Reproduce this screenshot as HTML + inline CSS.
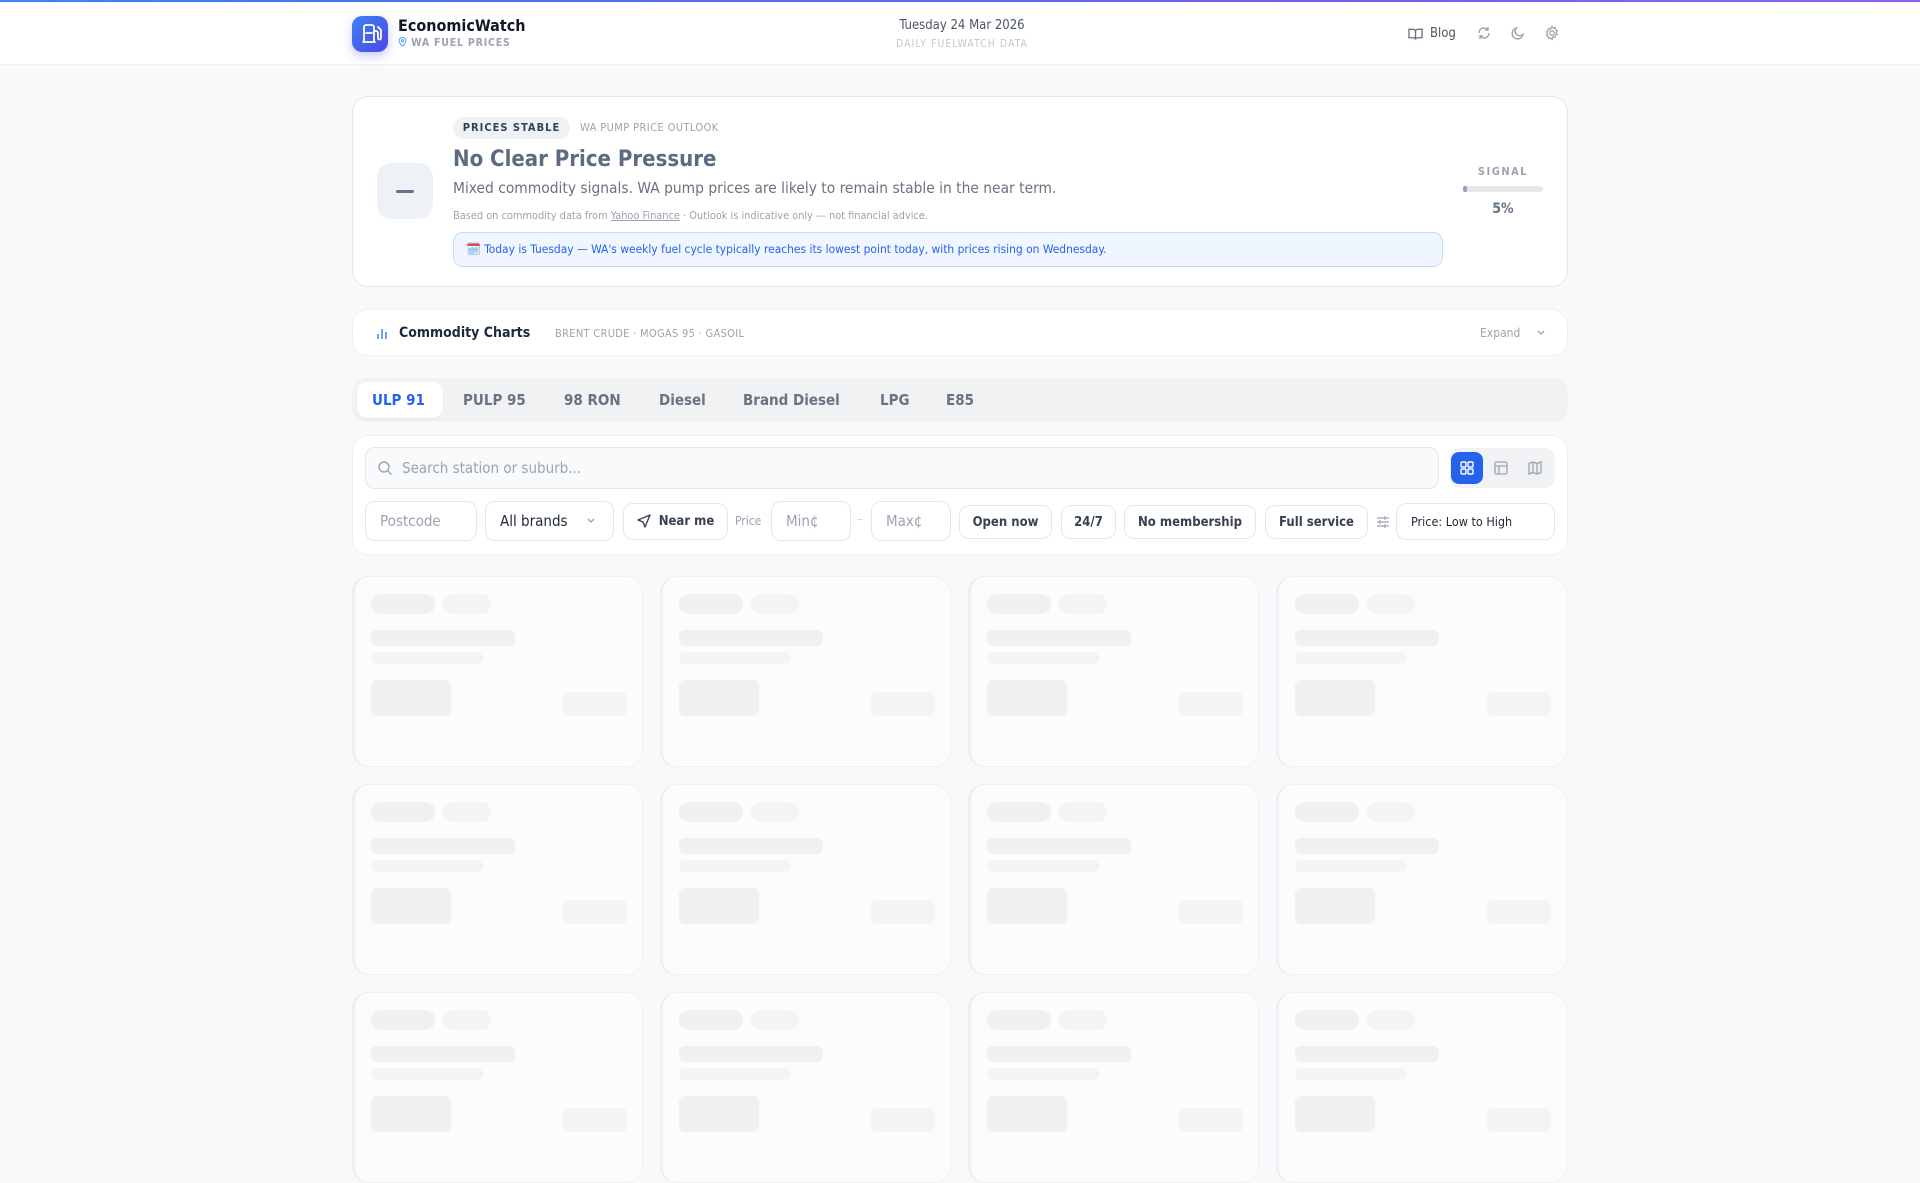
<!DOCTYPE html>
<html><head><meta charset="utf-8"><style>
*{box-sizing:border-box;margin:0;padding:0}
body{width:1920px;height:1080px;overflow:hidden;background:#f8f9fb;font-family:"DejaVu Sans Condensed","DejaVu Sans","Liberation Sans",sans-serif;color:#111827;position:relative}
.a{position:absolute}
.topbar{left:0;top:0;width:1920px;height:2px;background:linear-gradient(90deg,#3b82f6,#6366f1,#8b5cf6)}
header{position:absolute;left:0;top:2px;width:1920px;height:63px;background:#fff;border-bottom:1px solid #eef0f3}
.card{position:absolute;background:#fff;border:1px solid #e5e7eb;border-radius:16px}
.sk{position:absolute;background:#fcfcfc;border:1px solid #eef0f3;border-left:3px solid #eceff4;border-radius:16px;width:291px;height:191px}
.sk i{position:absolute;display:block;background:#eff0f2;border-radius:6px}
.sk i.l{background:#f3f4f6}
.inp{position:absolute;border:1px solid #e5e7eb;border-radius:10px;background:#fff;font-size:15px;color:#9ca3af;display:flex;align-items:center;padding-left:14px;height:40px;top:501px}
.chip{position:absolute;border:1px solid #e5e7eb;border-radius:10px;background:#fff;font-size:13px;font-weight:bold;color:#374151;display:flex;align-items:center;justify-content:center;height:34px;top:505px}
.tab{position:absolute;top:391px;font-size:15px;font-weight:bold;color:#6b7280}
</style></head><body>
<div class="a topbar"></div>
<header>
 <div class="a" style="left:352px;top:14px;width:36px;height:36px;border-radius:10px;background:linear-gradient(135deg,#3b82f6,#4f46e5);box-shadow:0 4px 10px rgba(79,70,229,.3)">
  <svg width="36" height="36" viewBox="0 0 36 36" fill="none" stroke="#fff" stroke-width="1.8" stroke-linecap="round" stroke-linejoin="round"><path d="M12 26V11a2 2 0 0 1 2-2h6a2 2 0 0 1 2 2v15M11 26h12M14 17h6M22 15h2a2 2 0 0 1 2 2v5a1.5 1.5 0 0 0 3 0v-8l-3-3"/></svg>
 </div>
 <div class="a" style="left:398px;top:14px;font-size:16px;font-weight:bold;color:#111827">EconomicWatch</div>
 <div class="a" style="left:398px;top:35px;font-size:10.5px;font-weight:bold;color:#9ca3af;letter-spacing:.8px">
  <svg width="9" height="10" viewBox="0 0 10 12" style="vertical-align:-1px" fill="none" stroke="#60a5fa" stroke-width="1.3"><path d="M5 11s4-3.5 4-6.5a4 4 0 0 0-8 0C1 7.5 5 11 5 11z"/><circle cx="5" cy="4.5" r="1.3"/></svg> WA FUEL PRICES</div>
 <div class="a" style="left:862px;width:200px;top:16px;text-align:center;font-size:13px;color:#4b5563">Tuesday 24 Mar 2026</div>
 <div class="a" style="left:842px;width:240px;top:36px;text-align:center;font-size:10.5px;color:#c4c8cf;letter-spacing:1px">DAILY FUELWATCH DATA</div>
 <svg class="a" style="left:1408px;top:25px" width="15" height="14" viewBox="0 0 16 14" fill="none" stroke="#6b7280" stroke-width="1.4"><path d="M1 2h4.5A2.5 2.5 0 0 1 8 4.5V13a2 2 0 0 0-2-2H1zM15 2h-4.5A2.5 2.5 0 0 0 8 4.5V13a2 2 0 0 1 2-2h5z"/></svg>
 <div class="a" style="left:1430px;top:24px;font-size:13px;color:#4b5563">Blog</div>
 <svg class="a" style="left:1476px;top:23px" width="16" height="16" viewBox="0 0 16 16" fill="none" stroke="#9ca3af" stroke-width="1.4"><path d="M3 8a5 5 0 0 1 9-3M13 8a5 5 0 0 1-9 3M12 2v3H9M4 14v-3h3"/></svg>
 <svg class="a" style="left:1510px;top:23px" width="16" height="16" viewBox="0 0 16 16" fill="none" stroke="#9ca3af" stroke-width="1.4"><path d="M13 9.5A5.5 5.5 0 1 1 6.5 3 4.3 4.3 0 0 0 13 9.5z"/></svg>
 <svg class="a" style="left:1544px;top:23px" width="16" height="16" viewBox="0 0 16 16" fill="none" stroke="#9ca3af" stroke-width="1.3"><circle cx="8" cy="8" r="2.2"/><path d="M8 1.5l1.2 1.6 2-.4.4 2 1.6 1.2-1 1.8.9 1.8-1.9.8-.3 2-2-.3L8 14.5l-1.3-1.5-2 .3-.3-2-1.9-.8.9-1.8-1-1.8 1.6-1.2.4-2 2 .4z"/></svg>
</header>

<div class="card" style="left:352px;top:96px;width:1216px;height:191px">
 <div class="a" style="left:24px;top:66px;width:56px;height:56px;border-radius:14px;background:#eef1f6"><div class="a" style="left:19px;top:27px;width:18px;height:3px;border-radius:2px;background:#64748b"></div></div>
 <div class="a" style="left:100px;top:20px;width:117px;height:22px;border-radius:11px;background:#eef1f6;font-size:11px;font-weight:bold;color:#334155;letter-spacing:1px;text-align:center;line-height:22px">PRICES STABLE</div>
 <div class="a" style="left:227px;top:24px;font-size:11px;color:#9ca3af;letter-spacing:.4px">WA PUMP PRICE OUTLOOK</div>
 <div class="a" style="left:100px;top:50px;font-size:22px;font-weight:bold;color:#5b6b82">No Clear Price Pressure</div>
 <div class="a" style="left:100px;top:82px;font-size:15.4px;color:#6b7280">Mixed commodity signals. WA pump prices are likely to remain stable in the near term.</div>
 <div class="a" style="left:100px;top:112px;font-size:10.9px;color:#9ca3af">Based on commodity data from <u>Yahoo Finance</u> · Outlook is indicative only — not financial advice.</div>
 <div class="a" style="left:100px;top:135px;width:990px;height:35px;border-radius:10px;background:#eff6ff;border:1px solid #bfdbfe;font-size:11.9px;color:#2563eb;line-height:33px;padding-left:12px">🗓️ Today is Tuesday — WA's weekly fuel cycle typically reaches its lowest point today, with prices rising on Wednesday.</div>
 <div class="a" style="left:1110px;top:68px;width:80px;text-align:center;font-size:11px;font-weight:bold;color:#9ca3af;letter-spacing:1.5px">SIGNAL</div>
 <div class="a" style="left:1110px;top:89px;width:80px;height:6px;border-radius:3px;background:#e5e7eb"><div style="width:4px;height:6px;border-radius:3px;background:#94a3b8"></div></div>
 <div class="a" style="left:1110px;top:104px;width:80px;text-align:center;font-size:14px;font-weight:bold;color:#64748b">5%</div>
</div>

<div class="card" style="left:352px;top:309px;width:1216px;height:47px;border-color:#eef0f3">
 <svg class="a" style="left:22px;top:16px" width="14" height="14" viewBox="0 0 14 14" stroke="#3b82f6" stroke-width="1.5"><path d="M3 13V8M7 13V3M11 13V6"/></svg>
 <div class="a" style="left:46px;top:15px;font-size:14px;font-weight:bold;color:#1f2937">Commodity Charts</div>
 <div class="a" style="left:202px;top:17px;font-size:11px;color:#9ca3af;letter-spacing:.3px">BRENT CRUDE · MOGAS 95 · GASOIL</div>
 <div class="a" style="left:1127px;top:16px;font-size:12px;color:#9ca3af">Expand</div>
 <svg class="a" style="left:1183px;top:19px" width="10" height="8" viewBox="0 0 10 8" fill="none" stroke="#9ca3af" stroke-width="1.3"><path d="M2 2l3 3 3-3"/></svg>
</div>

<div class="a" style="left:352px;top:378px;width:1216px;height:44px;border-radius:14px;background:#f1f2f4"></div>
<div class="a" style="left:357px;top:382px;width:86px;height:36px;border-radius:10px;background:#fff;box-shadow:0 1px 2px rgba(0,0,0,.06)"></div>
<div class="tab" style="left:372px;color:#2563eb">ULP 91</div>
<div class="tab" style="left:463px">PULP 95</div>
<div class="tab" style="left:564px">98 RON</div>
<div class="tab" style="left:659px">Diesel</div>
<div class="tab" style="left:743px">Brand Diesel</div>
<div class="tab" style="left:880px">LPG</div>
<div class="tab" style="left:946px">E85</div>

<div class="card" style="left:352px;top:435px;width:1216px;height:120px;border-color:#eef0f3"></div>
<div class="a" style="left:365px;top:447px;width:1074px;height:42px;border:1px solid #e5e7eb;border-radius:10px;background:#f9fafb"></div>
<svg class="a" style="left:377px;top:460px" width="16" height="16" viewBox="0 0 16 16" fill="none" stroke="#9ca3af" stroke-width="1.4"><circle cx="7" cy="7" r="5"/><path d="M11 11l3.5 3.5"/></svg>
<div class="a" style="left:402px;top:459px;font-size:15px;color:#9ca3af">Search station or suburb...</div>
<div class="a" style="left:1450px;top:448px;width:105px;height:40px;border-radius:10px;background:#f1f2f4"></div>
<div class="a" style="left:1451px;top:452px;width:32px;height:32px;border-radius:8px;background:#2563eb"></div>
<svg class="a" style="left:1459px;top:460px" width="16" height="16" viewBox="0 0 16 16" fill="none" stroke="#fff" stroke-width="1.4"><rect x="2" y="2" width="5" height="5" rx="1"/><rect x="9" y="2" width="5" height="5" rx="1"/><rect x="2" y="9" width="5" height="5" rx="1"/><rect x="9" y="9" width="5" height="5" rx="1"/></svg>
<svg class="a" style="left:1493px;top:460px" width="16" height="16" viewBox="0 0 16 16" fill="none" stroke="#9ca3af" stroke-width="1.3"><rect x="2" y="2" width="12" height="12" rx="1.5"/><path d="M2 6h12M6 6v8"/></svg>
<svg class="a" style="left:1527px;top:460px" width="16" height="16" viewBox="0 0 16 16" fill="none" stroke="#9ca3af" stroke-width="1.3"><path d="M2 3.5l4-1.5 4 1.5 4-1.5v10.5l-4 1.5-4-1.5-4 1.5zM6 2v10.5M10 3.5V14"/></svg>

<div class="inp" style="left:365px;width:112px">Postcode</div>
<div class="inp" style="left:485px;width:129px;color:#1f2937">All brands</div>
<svg class="a" style="left:586px;top:517px" width="10" height="8" viewBox="0 0 10 8" fill="none" stroke="#9ca3af" stroke-width="1.3"><path d="M2 2l3 3 3-3"/></svg>
<div class="chip" style="left:623px;width:105px;height:37px;top:503px;padding-left:22px">Near me</div>
<svg class="a" style="left:637px;top:514px" width="14" height="14" viewBox="0 0 14 14" fill="none" stroke="#374151" stroke-width="1.4" stroke-linejoin="round"><path d="M13 1L1 6l5 2 2 5z"/></svg>
<div class="a" style="left:735px;top:514px;font-size:12px;color:#9ca3af">Price</div>
<div class="inp" style="left:771px;width:80px">Min¢</div>
<div class="a" style="left:857px;top:512px;font-size:13px;color:#d1d5db">–</div>
<div class="inp" style="left:871px;width:80px">Max¢</div>
<div class="chip" style="left:959px;width:93px">Open now</div>
<div class="chip" style="left:1061px;width:55px">24/7</div>
<div class="chip" style="left:1124px;width:132px">No membership</div>
<div class="chip" style="left:1265px;width:103px">Full service</div>
<svg class="a" style="left:1376px;top:514px" width="14" height="16" viewBox="0 0 14 16" fill="none" stroke="#9ca3af" stroke-width="1.2"><path d="M1 4h12M1 8h12M1 12h12M9 2v4M4 6v4M9 10v4"/></svg>
<div class="inp" style="left:1396px;width:159px;height:37px;top:503px;color:#1f2937;font-size:12.5px">Price: Low to High</div>

<div id="g"></div>
<script>
var h='';var xs=[352,660,968,1276],ys=[576,784,992];
ys.forEach(function(y){xs.forEach(function(x){
h+='<div class="sk" style="left:'+x+'px;top:'+y+'px"><i style="left:16px;top:17px;width:64px;height:20px;border-radius:10px"></i><i class="l" style="left:88px;top:17px;width:48px;height:20px;border-radius:10px"></i><i style="left:16px;top:53px;width:144px;height:16px"></i><i class="l" style="left:16px;top:75px;width:112px;height:12px"></i><i style="left:16px;top:103px;width:80px;height:36px"></i><i class="l" style="left:208px;top:115px;width:64px;height:24px"></i></div>';
});});
document.getElementById('g').innerHTML=h;
</script>
</body></html>
